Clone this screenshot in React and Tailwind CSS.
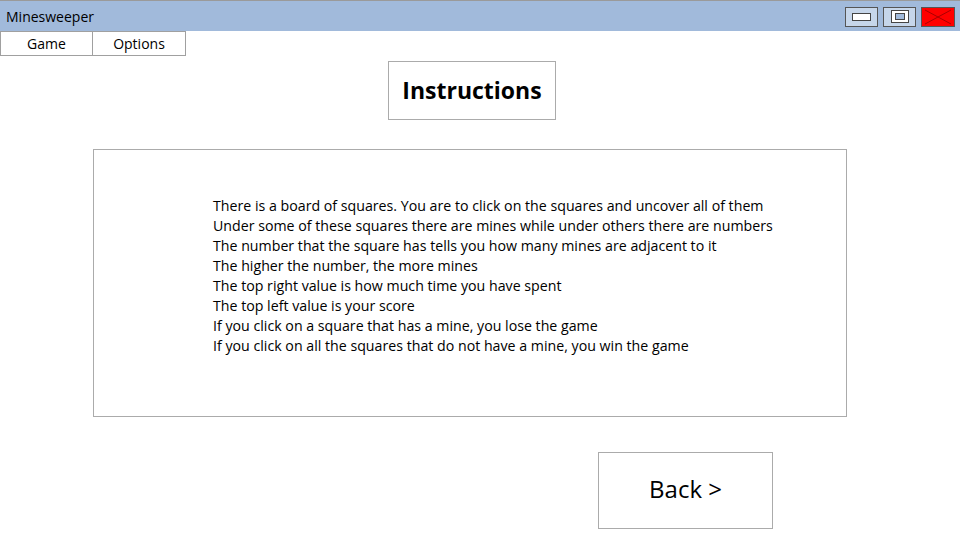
const lines = [
  "There is a board of squares. You are to click on the squares and uncover all of them",
  "Under some of these squares there are mines while under others there are numbers",
  "The number that the square has tells you how many mines are adjacent to it",
  "The higher the number, the more mines",
  "The top right value is how much time you have spent",
  "The top left value is your score",
  "If you click on a square that has a mine, you lose the game",
  "If you click on all the squares that do not have a mine, you win the game",
];

const App = () => {
  return (
    <div className="w-[960px] h-[540px] bg-white overflow-hidden text-black font-['Open_Sans',sans-serif]">
      <div className="h-[31px] bg-[#a1badb] border-t border-[#9a9a9a] flex items-center justify-between">
        <span className="pl-[6px] text-[14px]">Minesweeper</span>
        <div className="flex gap-[5px] pr-[5px] pt-[1px]">
          <div className="w-[33px] h-[20px] bg-[#c6d6ea] border border-[#555] flex items-center justify-center">
            <div className="w-[19px] h-[8px] bg-white border border-[#444]" />
          </div>
          <div className="w-[33px] h-[20px] bg-[#c6d6ea] border border-[#555] flex items-center justify-center">
            <div className="w-[18px] h-[13px] bg-white border border-[#444] flex items-center justify-center">
              <div className="w-[10px] h-[7px] bg-[#a1badb] border border-[#444]" />
            </div>
          </div>
          <div className="w-[34px] h-[20px] bg-[#ff0000] border border-[#555] flex items-center justify-center">
            <svg width="30" height="16" viewBox="0 0 30 16">
              <path d="M2 1 L28 15 M28 1 L2 15" stroke="#a00" strokeWidth="1" />
            </svg>
          </div>
        </div>
      </div>
      <div className="flex h-[25px]">
        <button className="w-[93px] border border-[#a0a0a0] bg-white text-[14px]">Game</button>
        <button className="w-[93px] border border-l-0 border-[#a0a0a0] bg-white text-[14px]">Options</button>
      </div>
      <div className="ml-[388px] mt-[5px] w-[168px] h-[59px] border border-[#ababab] flex items-center justify-center">
        <h1 className="text-[23px] font-bold">Instructions</h1>
      </div>
      <div className="ml-[93px] mt-[29px] w-[754px] h-[268px] border border-[#ababab] pl-[119px] pt-[46px]">
        {lines.map((l) => (
          <p key={l} className="text-[14.2px] leading-[20px]">{l}</p>
        ))}
      </div>
      <div className="ml-[598px] mt-[35px] w-[175px] h-[77px] border border-[#ababab] flex items-center justify-center">
        <span className="text-[24px] -mt-[4px]">Back &gt;</span>
      </div>
    </div>
  );
};

export default App;
